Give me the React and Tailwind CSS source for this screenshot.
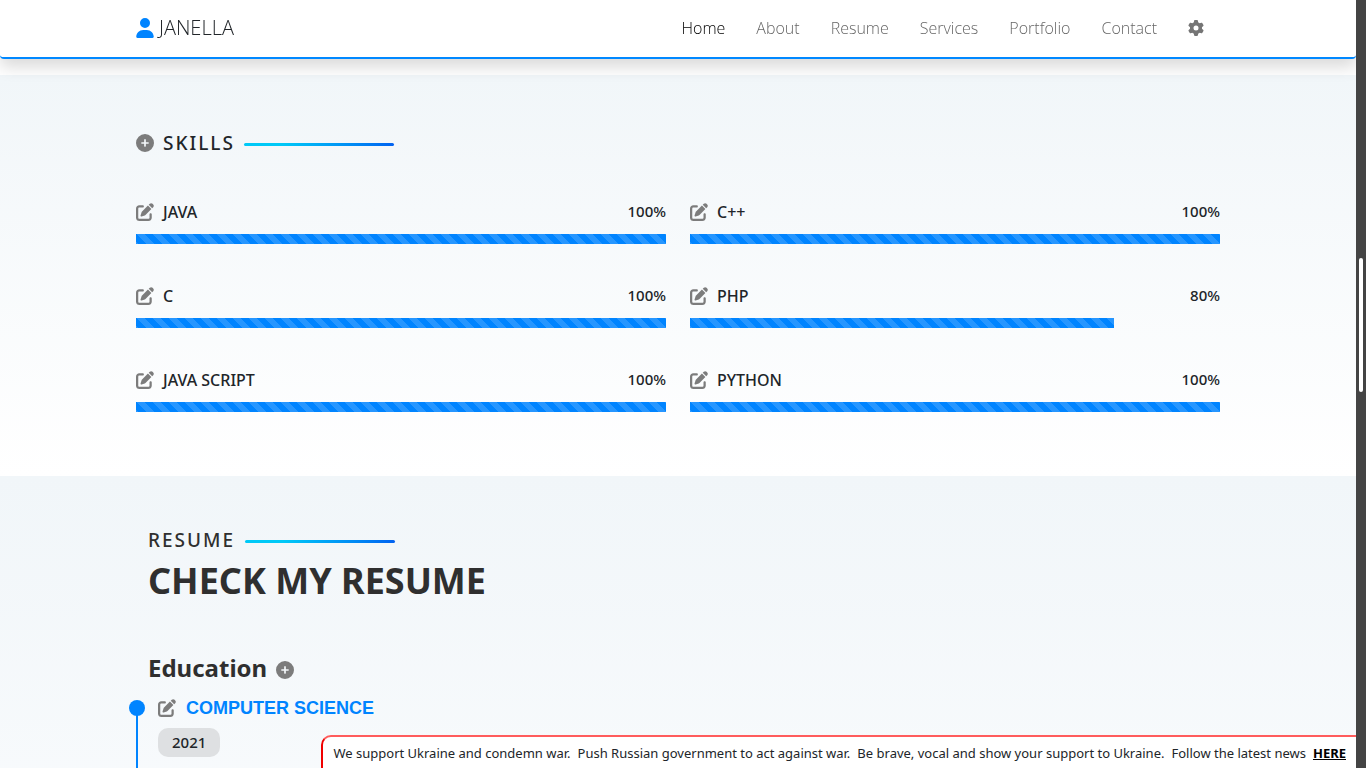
import React from "react";
import { FaUser, FaGear, FaCirclePlus, FaPenToSquare } from "react-icons/fa6";

const links = ["Home", "About", "Resume", "Services", "Portfolio", "Contact"];

const skills = [
  ["JAVA", 100],
  ["C++", 100],
  ["C", 100],
  ["PHP", 80],
  ["JAVA SCRIPT", 100],
  ["PYTHON", 100],
];

function Rule() {
  return (
    <span className="mt-[3px] h-[3px] w-[150px] rounded-sm bg-linear-to-r from-[#00c9f7] from-25% to-[#0562f0]" />
  );
}

function IconButton({ label, icon: Icon }) {
  return (
    <button type="button" aria-label={label} className="shrink-0 text-[18px] text-[#7c7c7c]">
      <Icon />
    </button>
  );
}

function Navbar() {
  return (
    <header className="sticky top-0 z-10 rounded-b-sm border-b-2 border-[#0088ff] bg-white font-['Open_Sans','Noto_Sans',sans-serif] shadow-[0_8px_16px_rgba(0,0,0,0.15)]">
      <div className="mx-auto flex h-[57px] max-w-[1084px] items-center justify-between pb-px">
        <a href="#home" className="flex items-center gap-[5px] text-[20px] font-light text-[#212529]">
          <FaUser className="h-5 w-[18px] text-[#0084ff]" />
          JANELLA
        </a>
        <nav className="flex items-center gap-[31px] pr-4 text-base font-light text-[#666]">
          {links.map((name) => (
            <a
              key={name}
              href={"#" + name.toLowerCase()}
              className={name === "Home" ? "text-black" : ""}
            >
              {name}
            </a>
          ))}
          <button type="button" aria-label="Settings" className="text-[#757575]">
            <FaGear />
          </button>
        </nav>
      </div>
    </header>
  );
}

function Skill({ name, value }) {
  return (
    <div className="h-[84px]">
      <div className="flex h-8 items-start justify-between text-[15px] leading-[18px] font-medium text-[#212529]">
        <div className="flex items-center gap-[9px]">
          <IconButton label={"Edit " + name} icon={FaPenToSquare} />
          <span className="text-base leading-5">{name}</span>
        </div>
        <span>{value}%</span>
      </div>
      <div role="progressbar" aria-label={name} aria-valuenow={value} aria-valuemin={0} aria-valuemax={100}>
        <div
          className="h-[10px] bg-[#0084ff] bg-[linear-gradient(45deg,rgba(255,255,255,0.15)_25%,transparent_25%,transparent_50%,rgba(255,255,255,0.15)_50%,rgba(255,255,255,0.15)_75%,transparent_75%,transparent)] bg-size-[16px_16px]"
          style={{ width: value + "%" }}
        />
      </div>
    </div>
  );
}

function Skills() {
  return (
    <section className="mt-4 bg-linear-to-b from-[#f1f6f9] to-white pt-[54px] pb-[22px]">
      <div className="mx-auto max-w-[1084px]">
        <div className="flex h-7 items-center gap-[9px]">
          <IconButton label="Add skill" icon={FaCirclePlus} />
          <h2 className="text-[19px] font-medium tracking-[2px] text-[#212529]">SKILLS</h2>
          <Rule />
        </div>
        <div className="mt-[45px] grid grid-cols-2 gap-x-6">
          {skills.map(([name, value]) => (
            <Skill key={name} name={name} value={value} />
          ))}
        </div>
      </div>
    </section>
  );
}

function Resume() {
  return (
    <section className="grow bg-linear-to-b from-[#f1f6f9] to-[#f9fbfd] pt-[50px]">
      <div className="mx-auto max-w-[1084px]">
        <div className="pl-3 text-[#2f2f2f]">
          <div className="flex h-7 items-center gap-[10px]">
            <h2 className="text-[19px] font-medium tracking-[2px]">RESUME</h2>
            <Rule />
          </div>
          <p className="mt-1 text-[36px] leading-[46px] font-bold">CHECK MY RESUME</p>
          <div className="mt-[46px] flex items-center gap-[9px]">
            <h3 className="text-[24px] leading-9 font-bold">Education</h3>
            <span className="flex pt-1">
              <IconButton label="Add education" icon={FaCirclePlus} />
            </span>
          </div>
        </div>
        <div className="relative mt-[22px] h-[150px] border-l-2 border-[#0084ff]">
          <span className="absolute -top-2 -left-[9px] size-4 rounded-full bg-[#0084ff]" />
          <div className="absolute -top-3 left-5">
            <div className="flex h-6 items-center gap-[10px]">
              <IconButton label="Edit education" icon={FaPenToSquare} />
              <h4 className="font-['Liberation_Sans',sans-serif] text-[18px] font-bold text-[#0084ff]">
                COMPUTER SCIENCE
              </h4>
            </div>
            <span className="mt-2 inline-block rounded-[10px] bg-[#dee0e2] px-[14px] py-1 text-[15px] leading-[21px] font-medium text-[#212529]">
              2021
            </span>
          </div>
        </div>
      </div>
    </section>
  );
}

export default function App() {
  return (
    <div className="flex h-screen overflow-hidden bg-white font-['Noto_Sans','Open_Sans',sans-serif]">
      <div className="flex min-w-0 grow flex-col overflow-hidden">
        <Navbar />
        <Skills />
        <Resume />
      </div>
      <div className="w-[10px] shrink-0 bg-[#444] px-[3px] pt-[258px]">
        <div className="h-[134px] rounded-sm bg-white" />
      </div>
      <aside className="fixed right-[10px] bottom-0 z-20 flex h-[33px] gap-[7px] rounded-tl-[10px] border-t-2 border-l-2 border-t-[#ff5c5c] border-l-[#f00000] bg-white px-[10px] pt-[6px] text-[13px] leading-[21px] whitespace-nowrap text-[#212529]">
        <span>We support Ukraine and condemn war.</span>
        <span>Push Russian government to act against war.</span>
        <span>Be brave, vocal and show your support to Ukraine.</span>
        <span>Follow the latest news</span>
        <a href="#news" className="font-bold text-black underline">
          HERE
        </a>
      </aside>
    </div>
  );
}
